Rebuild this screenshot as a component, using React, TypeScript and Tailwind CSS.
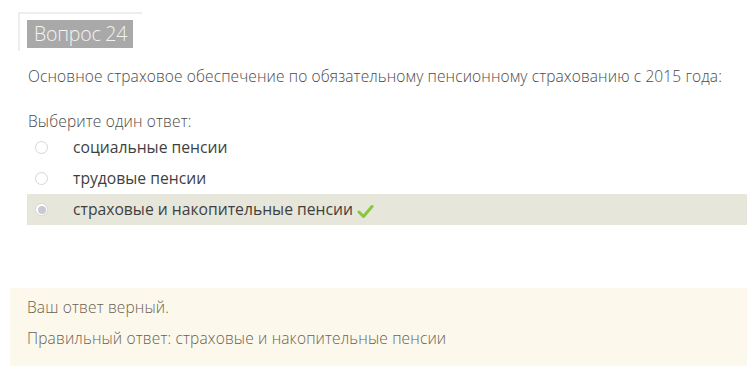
import React from 'react';

const options = [
  { label: 'социальные пенсии', checked: false },
  { label: 'трудовые пенсии', checked: false },
  { label: 'страховые и накопительные пенсии', checked: true },
];

function Radio({ checked }: { checked: boolean }) {
  return (
    <span className="flex h-[13px] w-[13px] items-center justify-center rounded-full border border-[#d6d6d6] bg-white">
      {checked && <span className="h-[8px] w-[8px] rounded-full bg-[#c9c9d2]" />}
    </span>
  );
}

export default function App() {
  return (
    <div className="min-h-[373px] w-[747px] bg-white font-['Open_Sans',sans-serif] text-[#4a4a4a]">
      {/* шапка вопроса */}
      <div className="pl-[18px] pt-[12px]">
        <div className="w-[124px] border-l-2 border-t-2 border-[#eeeeee] pb-[3px] pl-[7px] pt-[6px]">
          <div className="flex h-[28px] w-[106px] items-center bg-[#a9a9a9] pl-[7px] text-[19.5px] font-light tracking-[-0.2px] text-[#f4f4f4]">
            Вопрос 24
          </div>
        </div>
      </div>

      <div className="pl-[28px] pr-[10px]">
        <p className="mt-[15px] text-[15.5px] font-light leading-[20px] tracking-[0.12px] whitespace-nowrap">
          Основное страховое обеспечение по обязательному пенсионному страхованию с 2015 года:
        </p>
        <p className="mt-[25px] text-[15.5px] font-light leading-[20px] tracking-[0.15px]">Выберите один ответ:</p>
      </div>

      <div className="ml-[27px] mt-[1px] flex flex-col">
        {options.map((o) => (
          <div
            key={o.label}
            className={`flex h-[31px] items-center ${o.checked ? 'bg-[#e6e6da]' : ''}`}
          >
            <span className="ml-[8px] w-[38px]">
              <Radio checked={o.checked} />
            </span>
            <span className="text-[15.7px] text-[#3f3f3f]">{o.label}</span>
            {o.checked && (
              <svg width="17" height="15" viewBox="0 0 17 15" className="ml-[4px] mt-[4px]">
                <path d="M2 8 L6.5 12.5 L15 2.5" fill="none" stroke="#8cc63f" strokeWidth="3" strokeLinecap="round" strokeLinejoin="round" />
              </svg>
            )}
          </div>
        ))}
      </div>

      {/* отзыв */}
      <div className="ml-[10px] mt-[63px] h-[78px] bg-[#fcf8ec] pl-[17px] pt-[9px] text-[15.5px] font-light tracking-[0.15px] text-[#6b6253]">
        <p className="leading-[20px]">Ваш ответ верный.</p>
        <p className="mt-[11px] leading-[20px]">Правильный ответ: страховые и накопительные пенсии</p>
      </div>
    </div>
  );
}
